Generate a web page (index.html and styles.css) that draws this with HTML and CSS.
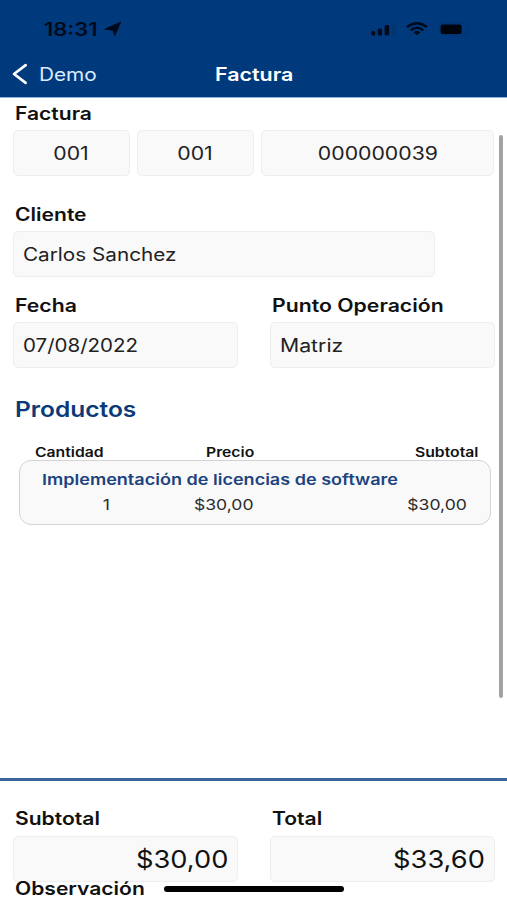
FILE: index.html
```html
<!DOCTYPE html>
<html lang="es">
<head>
<meta charset="utf-8">
<title>Factura</title>
<link rel="stylesheet" href="styles.css">
</head>
<body>
<div class="screen">
  <header class="header">
    <div class="status">
      <div class="status-left">
        <span class="clock"><span class="w">18:31</span></span>
        <svg class="arrow" width="18" height="16" viewBox="0 0 18 16"><path d="M16.6 1.2 10.8 14.4 9 9.2.8 8.2Z" fill="#000a1c" stroke="#000a1c" stroke-width="1" stroke-linejoin="round"/></svg>
      </div>
      <div class="status-right">
        <svg width="26" height="14" viewBox="0 0 26 14"><g fill="#000a1c"><rect x="0" y="9" width="4.2" height="4.6" rx="1.6"/><rect x="6.7" y="6.4" width="4.4" height="7.2" rx="1.5"/><rect x="13.6" y="3" width="4.6" height="10.6" rx="1.5"/></g><rect x="20.5" y="1" width="4" height="12.5" rx="1.3" fill="#00346f"/></svg>
        <svg class="wifi" width="22" height="14" viewBox="0 0 22 14"><g fill="none" stroke="#000a1c" stroke-width="2.3"><path d="M1 5.2Q11-2.6 21 5.2"/><path d="M4.7 8.3Q11 3.2 17.3 8.3"/></g><path d="M7.5 10.2Q11 7.6 14.5 10.2L11 13.3Z" fill="#000a1c"/></svg>
        <svg class="battery" width="36" height="14" viewBox="0 0 36 14"><rect x="1" y="1" width="29" height="12" rx="3.6" fill="none" stroke="#00326f"/><rect x="2.6" y="2.4" width="21" height="9.6" rx="2" fill="#00040c"/><path d="M32 5q2.4 2 0 4" fill="#00326f"/></svg>
      </div>
    </div>
    <nav class="nav">
      <svg class="back" width="16" height="22" viewBox="0 0 16 22"><path d="M13.7 2.2 2 11l11.7 8.8" fill="none" stroke="#fff" stroke-width="2.7" stroke-linecap="round" stroke-linejoin="round"/></svg>
      <span class="demo"><span class="w">Demo</span></span>
      <h1 class="title"><span class="w">Factura</span></h1>
    </nav>
  </header>

  <main class="content">
    <section class="group">
      <h2 class="label"><span class="w">Factura</span></h2>
      <div class="number-row">
        <div class="field center"><span class="w">001</span></div>
        <div class="field center"><span class="w">001</span></div>
        <div class="field center"><span class="w">000000039</span></div>
      </div>
    </section>
    <section class="group client">
      <h2 class="label"><span class="w">Cliente</span></h2>
      <div class="field"><span class="w">Carlos Sanchez</span></div>
    </section>
    <section class="group pair">
      <div>
        <h2 class="label"><span class="w">Fecha</span></h2>
        <div class="field date"><span class="w">07/08/2022</span></div>
      </div>
      <div>
        <h2 class="label"><span class="w">Punto Operación</span></h2>
        <div class="field"><span class="w">Matriz</span></div>
      </div>
    </section>
    <h2 class="products"><span class="w">Productos</span></h2>
    <div class="heads">
      <span class="w">Cantidad</span>
      <span class="w">Precio</span>
      <span class="w">Subtotal</span>
    </div>
    <article class="card">
      <h3 class="item"><span class="w">Implementación de licencias de software</span></h3>
      <div class="amounts">
        <span class="w">1</span>
        <span class="w">$30,00</span>
        <span class="w">$30,00</span>
      </div>
    </article>
    <div class="scrollbar"></div>
  </main>

  <footer class="footer">
    <div class="pair">
      <div>
        <h2 class="label"><span class="w">Subtotal</span></h2>
        <div class="field money"><span class="w">$30,00</span></div>
      </div>
      <div>
        <h2 class="label"><span class="w">Total</span></h2>
        <div class="field money"><span class="w">$33,60</span></div>
      </div>
    </div>
    <h2 class="label note"><span class="w">Observación</span></h2>
    <div class="home"></div>
  </footer>
</div>
</body>
</html>
```

FILE: styles.css
```css
* { box-sizing: border-box; }
body { margin: 0; background: #fff; }
h1, h2, h3 { margin: 0; font-size: inherit; font-weight: 600; }
svg { display: block; flex: none; }

.screen {
  width: 507px;
  height: 900px;
  overflow: hidden;
  display: flex;
  flex-direction: column;
  position: relative;
  font-family: Inter, "Liberation Sans", sans-serif;
  font-size: 18px;
  color: #111;
}

/* wide letterforms */
.w {
  display: inline-block;
  white-space: nowrap;
  transform: scaleX(var(--wide, 1.17));
  transform-origin: 0 50%;
}

.header { height: 97px; background: #003a7d; flex: none; box-shadow: 0 1px 0 #8fb3dc; }
.status { height: 50px; padding: 8px 33px 0 44px; display: flex; justify-content: space-between; align-items: center; }
.status-left, .status-right { display: flex; align-items: center; }
.clock { --wide: 1.22; width: 60px; font-size: 18px; font-weight: 600; color: #000a1c; }
.wifi { margin-left: 9px; }
.battery { margin-left: 10px; }
.nav { height: 48px; display: flex; align-items: center; padding-left: 12px; color: #fff; position: relative; }
.demo { --wide: 1.155; margin-left: 11px; width: 176px; color: #dcebff; }
.title { --wide: 1.19; font-weight: 600; }

.content { height: 681px; flex: none; position: relative; padding: 5px 13px 0; }
.label { height: 28px; line-height: 22px; padding-left: 1.5px; color: #111; }
.content .label { line-height: 24px; }
.field {
  height: 46px;
  border: 1px solid #eeeeef;
  border-radius: 5px;
  background: #f9f9fa;
  padding: 0 9px;
  display: flex;
  align-items: center;
  color: #222;
}
.center { --wide: 1.18; justify-content: center; }
.center .w { transform-origin: 50% 50%; }
.number-row { display: grid; grid-template-columns: 117px 117px 233px; gap: 7px; }
.client { margin-top: 27px; }
.client .field { --wide: 1.15; width: 422px; }
.date { --wide: 1.14; }
.pair { display: grid; grid-template-columns: 225px 225px; gap: 32px; }
.group.pair { --wide: 1.18; margin-top: 17px; }
.group.pair .date { --wide: 1.14; }

.products { --wide: 1.14; margin: 27px 0 0 1.5px; height: 28px; line-height: 28px; font-size: 21.5px; color: #0b3a78; }
.heads { --wide: 1.21; display: flex; height: 16px; line-height: 16px; margin-top: 21px; padding: 0 16px 0 22px; font-size: 13px; font-weight: 600; }
.heads .w:nth-child(2) { margin-left: 114px; }
.heads .w:last-child { margin-left: auto; transform-origin: 100% 50%; }
.card { margin: 0 3px 0 6px; height: 65px; border: 1px solid #d3d3d6; border-radius: 12px; background: #f9f9fa; padding: 9px 23px 0 22px; }
.item { --wide: 1.203; height: 20px; line-height: 20px; font-size: 15px; color: #1c437f; }
.amounts { display: flex; height: 20px; line-height: 20px; margin-top: 5px; font-size: 15px; color: #2a2a2a; }
.amounts .w:first-child { width: 68px; text-align: right; transform-origin: 100% 50%; }
.amounts .w:nth-child(2) { margin-left: 84px; }
.amounts .w:last-child { margin-left: auto; transform-origin: 100% 50%; }
.scrollbar { position: absolute; right: 4px; top: 38px; width: 4px; height: 563px; border-radius: 2px; background: #a2a2a4; }

.footer { height: 122px; flex: none; border-top: 3px solid #3b659a; padding: 27px 13px 0; position: relative; }
.money { --wide: 1.135; font-size: 24px; justify-content: flex-end; color: #111; }
.money .w { transform-origin: 100% 50%; }
.note { margin-top: -4px; position: relative; }
.footer .home { position: absolute; left: 164px; top: 105px; width: 180px; height: 6px; border-radius: 3px; background: #000; }
```
